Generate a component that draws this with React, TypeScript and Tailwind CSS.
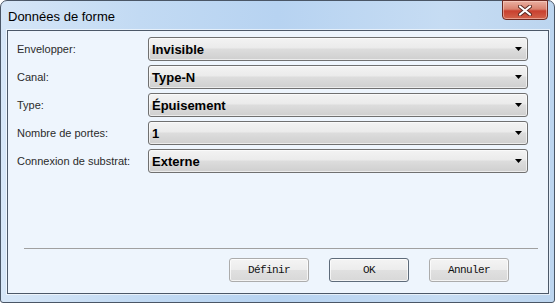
import React from "react";

const rows: [string, string][] = [
  ["Envelopper:", "Invisible"],
  ["Canal:", "Type-N"],
  ["Type:", "Épuisement"],
  ["Nombre de portes:", "1"],
  ["Connexion de substrat:", "Externe"],
];

function Combo({ value }: { value: string }) {
  return (
    <div className="relative w-[380px] h-[24px] rounded-[3px] border border-[#707070] bg-[linear-gradient(to_bottom,#f3f3f3_0%,#ebebeb_45%,#dddddd_50%,#cfcfcf_100%)] flex items-center pl-[3px] shadow-[inset_0_0_0_1px_rgba(255,255,255,0.6)]">
      <span className="text-[13px] font-bold text-black leading-none" style={{ fontFamily: '"Liberation Sans", Arial, sans-serif' }}>
        {value}
      </span>
      <svg className="absolute right-[5px] top-[9px]" width="7" height="4" viewBox="0 0 7 4">
        <polygon points="0,0 7,0 3.5,4" fill="#000" />
      </svg>
    </div>
  );
}

function Btn({ label, def }: { label: string; def?: boolean }) {
  return (
    <div
      className={`w-[80px] h-[24px] rounded-[3px] border ${def ? "border-[#5e6b7a]" : "border-[#acacac]"} bg-[linear-gradient(to_bottom,#f4f4f4_0%,#ececec_50%,#e0e0e0_51%,#d8d8d8_100%)] flex items-center justify-center shadow-[inset_0_0_0_1px_rgba(255,255,255,0.7)]`}
    >
      <span className="text-[11px] tracking-[-0.6px] text-[#111]" style={{ fontFamily: '"Liberation Mono", "Courier New", monospace' }}>
        {label}
      </span>
    </div>
  );
}

export default function App() {
  return (
    <div className="w-[555px] h-[303px] bg-white">
      <div className="w-[555px] h-[303px] rounded-t-[7px] rounded-b-[3px] border border-[#4a5666] bg-[linear-gradient(to_right,#d6e6f7_0%,#c2daf3_25%,#b7d3f1_50%,#c6dcf3_80%,#bcd5ef_100%)] flex flex-col pl-[6px] pr-[5px] pb-[8px] relative">
        <div className="h-[29px] flex items-start relative shrink-0">
          <span className="mt-[6px] ml-[1px] text-[13px] text-black" style={{ fontFamily: '"Liberation Sans", Arial, sans-serif' }}>
            Données de forme
          </span>
          <div className="absolute right-[1px] top-[-1px] w-[46px] h-[20px] rounded-b-[4px] border border-[#6e2a22] bg-[linear-gradient(to_bottom,#eab0a2_0%,#d9826f_45%,#c9402f_55%,#d2634b_100%)] flex items-center justify-center shadow-[inset_0_0_0_1px_rgba(255,220,210,0.5)]">
            <svg width="14" height="11" viewBox="0 0 14 11">
              <path d="M2 1.5 L12 9.5 M12 1.5 L2 9.5" stroke="#5a2a22" strokeWidth="4" strokeLinecap="round" />
              <path d="M2 1.5 L12 9.5 M12 1.5 L2 9.5" stroke="#ffffff" strokeWidth="2.2" strokeLinecap="round" />
            </svg>
          </div>
        </div>
        <div className="flex-1 border border-[#4c5868] bg-[#eef5fd] flex flex-col shadow-[0_0_0_1px_rgba(255,255,255,0.6)]">
          <div className="pt-[6px] pl-[9px] flex flex-col gap-[4px]">
            {rows.map(([l, v]) => (
              <div key={l} className="flex items-center h-[24px]">
                <span className="w-[131px] text-[11px] text-[#2b2b2b]" style={{ fontFamily: '"Liberation Sans", Arial, sans-serif' }}>
                  {l}
                </span>
                <Combo value={v} />
              </div>
            ))}
          </div>
          <div className="mt-auto ml-[16px] mr-[10px] h-px bg-[#a0a0a0]" />
          <div className="mt-[9px] mb-[11px] flex justify-end gap-[20px] pr-[39px]">
            <Btn label="Définir" />
            <Btn label="OK" def />
            <Btn label="Annuler" />
          </div>
        </div>
      </div>
    </div>
  );
}
